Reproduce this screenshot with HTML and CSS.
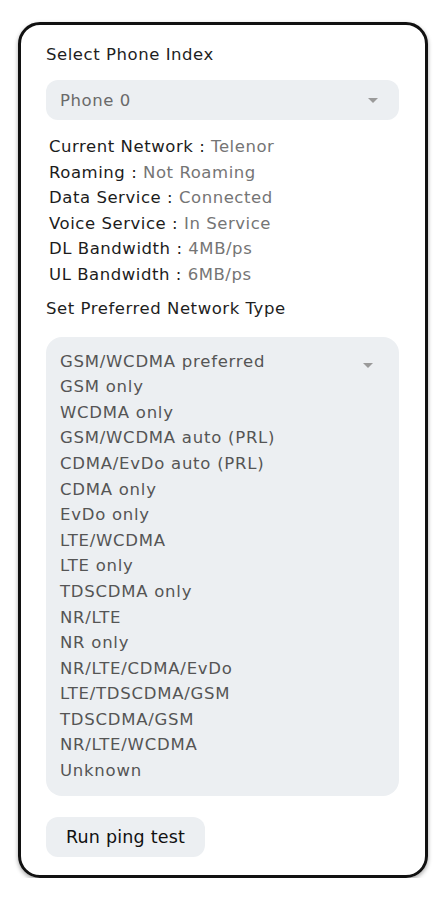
FILE: index.html
```html
<!DOCTYPE html>
<html>
<head>
<meta charset="utf-8">
<link rel="stylesheet" href="styles.css">
</head>
<body>
<div class="card">
  <div class="label">Select Phone Index</div>
  <div class="select">
    <span class="select-value">Phone 0</span>
    <span class="caret"></span>
  </div>
  <div class="info">
    <div class="row"><span class="key">Current Network : </span><span class="val">Telenor</span></div>
    <div class="row"><span class="key">Roaming : </span><span class="val">Not Roaming</span></div>
    <div class="row"><span class="key">Data Service : </span><span class="val">Connected</span></div>
    <div class="row"><span class="key">Voice Service : </span><span class="val">In Service</span></div>
    <div class="row"><span class="key">DL Bandwidth : </span><span class="val">4MB/ps</span></div>
    <div class="row"><span class="key">UL Bandwidth : </span><span class="val">6MB/ps</span></div>
  </div>
  <div class="label label-net">Set Preferred Network Type</div>
  <div class="list">
    <span class="caret caret-list"></span>
    <div class="item">GSM/WCDMA preferred</div>
    <div class="item">GSM only</div>
    <div class="item">WCDMA only</div>
    <div class="item">GSM/WCDMA auto (PRL)</div>
    <div class="item">CDMA/EvDo auto (PRL)</div>
    <div class="item">CDMA only</div>
    <div class="item">EvDo only</div>
    <div class="item">LTE/WCDMA</div>
    <div class="item">LTE only</div>
    <div class="item">TDSCDMA only</div>
    <div class="item">NR/LTE</div>
    <div class="item">NR only</div>
    <div class="item">NR/LTE/CDMA/EvDo</div>
    <div class="item">LTE/TDSCDMA/GSM</div>
    <div class="item">TDSCDMA/GSM</div>
    <div class="item">NR/LTE/WCDMA</div>
    <div class="item">Unknown</div>
  </div>
  <div class="btn">Run ping test</div>
</div>
</body>
</html>
```
FILE: styles.css
```css
* { box-sizing: border-box; }
html, body { margin: 0; padding: 0; background: #fff; }
body {
  font-family: "DejaVu Sans", "Open Sans", sans-serif;
  font-size: 16.5px;
  letter-spacing: 0.55px;
  color: #1c1c1c;
  padding: 22px 17px 0 18px;
}
.card {
  width: 410px;
  height: 856px;
  border: 3px solid #111;
  border-radius: 22px;
  box-shadow: 0 2px 4px rgba(0,0,0,0.35);
  padding: 17px 25px 0 25px;
  display: flex;
  flex-direction: column;
}
.label {
  line-height: 25px;
  color: #1e1e1e;
}
.select {
  margin-top: 13px;
  width: 353px;
  height: 40px;
  background: #eceff2;
  border-radius: 12px;
  display: flex;
  align-items: center;
  justify-content: space-between;
  padding: 0 21px 0 14px;
}
.select-value { color: #6a6a6a; }
.caret {
  width: 0; height: 0;
  border-left: 5px solid transparent;
  border-right: 5px solid transparent;
  border-top: 5px solid #9a9a9a;
}
.info {
  margin-top: 14px;
  padding-left: 3px;
}
.row { line-height: 25.6px; }
.key { color: #1c1c1c; }
.val { color: #757575; }
.label-net { margin-top: 8px; }
.list {
  position: relative;
  margin-top: 16px;
  width: 353px;
  background: #eceff2;
  border-radius: 16px;
  padding: 12px 14px;
}
.caret-list {
  position: absolute;
  right: 26px;
  top: 26px;
}
.item {
  line-height: 25.6px;
  letter-spacing: 0.75px;
  color: #555;
}
.btn {
  margin-top: 21px;
  align-self: flex-start;
  height: 40px;
  padding: 0 20px;
  background: #eceff2;
  border-radius: 12px;
  display: flex;
  align-items: center;
  font-size: 17.5px;
  letter-spacing: 0.2px;
  color: #111;
}
```
